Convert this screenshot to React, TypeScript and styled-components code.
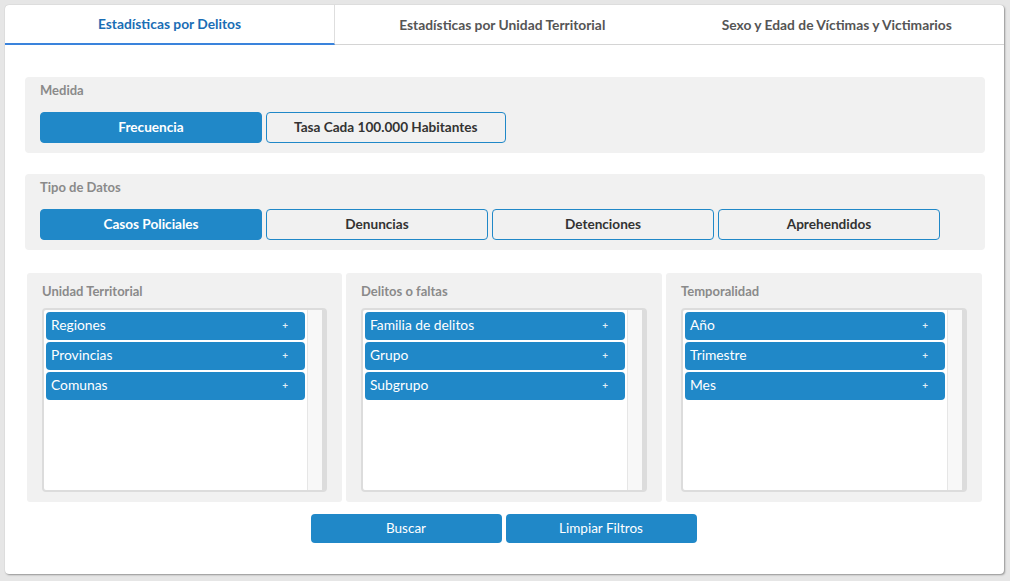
import React from "react";
import styled, { createGlobalStyle } from "styled-components";

const Global = createGlobalStyle`
  html, body { margin: 0; padding: 0; background: #e6e6e6; }
  body { font-family: Lato, "Noto Sans", sans-serif; }
  * { box-sizing: border-box; }
`;

const BLUE = "#2088c8";

const Page = styled.div`
  padding: 5px 6px 7px 5px;
  width: 1010px;
  height: 581px;
`;

const Card = styled.div`
  background: #fff;
  border-radius: 4px;
  box-shadow: 1px 1px 2px rgba(0, 0, 0, 0.35), 0 0 1px rgba(0, 0, 0, 0.2);
  height: 569px;
  display: flex;
  flex-direction: column;
`;

const Tabs = styled.div`
  display: grid;
  grid-template-columns: 330px 1fr 1fr;
  height: 40px;
  border-bottom: 1px solid #d4d4d4;
`;

const Tab = styled.div<{ $active?: boolean }>`
  display: flex;
  align-items: center;
  justify-content: center;
  font-size: 13.8px;
  font-weight: 700;
  color: ${(p) => (p.$active ? "#1a6db5" : "#555")};
  border-bottom: ${(p) => (p.$active ? "2px solid #3a83dc" : "none")};
  border-right: ${(p) => (p.$active ? "1px solid #dedede" : "none")};
  margin-bottom: ${(p) => (p.$active ? "-1px" : "0")};
  padding-bottom: 1px;
`;

const Body = styled.div`
  padding: 32px 19px 0 20px;
  display: flex;
  flex-direction: column;
`;

const Section = styled.div<{ $mt?: number }>`
  background: #f1f1f1;
  border-radius: 4px;
  padding: 3px 15px 10px;
  margin-top: ${(p) => p.$mt ?? 0}px;
`;

const Label = styled.div`
  font-size: 13px;
  font-weight: 700;
  color: #8a8a8a;
  line-height: 20px;
`;

const ButtonRow = styled.div`
  display: flex;
  gap: 4px;
  margin-top: 12px;
`;

const ToggleBtn = styled.div<{ $on?: boolean }>`
  min-width: 222px;
  height: 31px;
  padding: 0 27px 1px;
  border-radius: 4px;
  display: flex;
  align-items: center;
  justify-content: center;
  font-size: 13.6px;
  font-weight: 700;
  color: ${(p) => (p.$on ? "#fff" : "#333")};
  background: ${(p) => (p.$on ? BLUE : "transparent")};
  border: 1px solid ${BLUE};
`;

const Panels = styled.div`
  display: grid;
  grid-template-columns: 315px 316px 316px;
  gap: 4px;
  margin: 23px 0 0 2px;
`;

const Panel = styled.div`
  background: #f1f1f1;
  border-radius: 3px;
  padding: 8px 15px 10px;
  height: 229px;
  display: flex;
  flex-direction: column;
`;

const PanelLabel = styled(Label)`
  margin-bottom: 7px;
`;

const ListBox = styled.div`
  flex: 1;
  background: #fff;
  border: 2px solid #dcdcdc;
  border-right-width: 5px;
  border-radius: 4px;
  display: flex;
  overflow: hidden;
`;

const List = styled.div`
  flex: 1;
  padding: 2px;
  display: flex;
  flex-direction: column;
  gap: 2px;
`;

const Track = styled.div`
  width: 15px;
  background: #f8f8f8;
  border-left: 1px solid #e6e6e6;
`;

const Item = styled.div`
  height: 28px;
  background: ${BLUE};
  border-radius: 4px;
  color: #fff;
  font-size: 13.8px;
  display: flex;
  align-items: center;
  justify-content: space-between;
  padding: 0 17px 4px 5px;
`;

const Plus = styled.span`
  font-size: 10px;
  font-weight: 700;
  opacity: 0.85;
  padding-top: 2px;
`;

const Actions = styled.div`
  display: flex;
  justify-content: center;
  gap: 4px;
  margin-top: 12px;
  padding-right: 3px;
`;

const ActionBtn = styled.div`
  width: 191px;
  height: 29px;
  background: ${BLUE};
  border-radius: 4px;
  color: #fff;
  font-size: 13.5px;
  display: flex;
  align-items: center;
  justify-content: center;
  padding-bottom: 1px;
`;

const panels = [
  { title: "Unidad Territorial", items: ["Regiones", "Provincias", "Comunas"] },
  { title: "Delitos o faltas", items: ["Familia de delitos", "Grupo", "Subgrupo"] },
  { title: "Temporalidad", items: ["Año", "Trimestre", "Mes"] },
];

export default function App() {
  return (
    <Page>
      <Global />
      <Card>
        <Tabs>
          <Tab $active>Estadísticas por Delitos</Tab>
          <Tab>Estadísticas por Unidad Territorial</Tab>
          <Tab>Sexo y Edad de Víctimas y Victimarios</Tab>
        </Tabs>
        <Body>
          <Section>
            <Label>Medida</Label>
            <ButtonRow>
              <ToggleBtn $on>Frecuencia</ToggleBtn>
              <ToggleBtn>Tasa Cada 100.000 Habitantes</ToggleBtn>
            </ButtonRow>
          </Section>
          <Section $mt={21}>
            <Label>Tipo de Datos</Label>
            <ButtonRow>
              <ToggleBtn $on>Casos Policiales</ToggleBtn>
              <ToggleBtn>Denuncias</ToggleBtn>
              <ToggleBtn>Detenciones</ToggleBtn>
              <ToggleBtn>Aprehendidos</ToggleBtn>
            </ButtonRow>
          </Section>
          <Panels>
            {panels.map((p) => (
              <Panel key={p.title}>
                <PanelLabel>{p.title}</PanelLabel>
                <ListBox>
                  <List>
                    {p.items.map((it) => (
                      <Item key={it}>
                        {it}
                        <Plus>+</Plus>
                      </Item>
                    ))}
                  </List>
                  <Track />
                </ListBox>
              </Panel>
            ))}
          </Panels>
          <Actions>
            <ActionBtn>Buscar</ActionBtn>
            <ActionBtn>Limpiar Filtros</ActionBtn>
          </Actions>
        </Body>
      </Card>
    </Page>
  );
}
